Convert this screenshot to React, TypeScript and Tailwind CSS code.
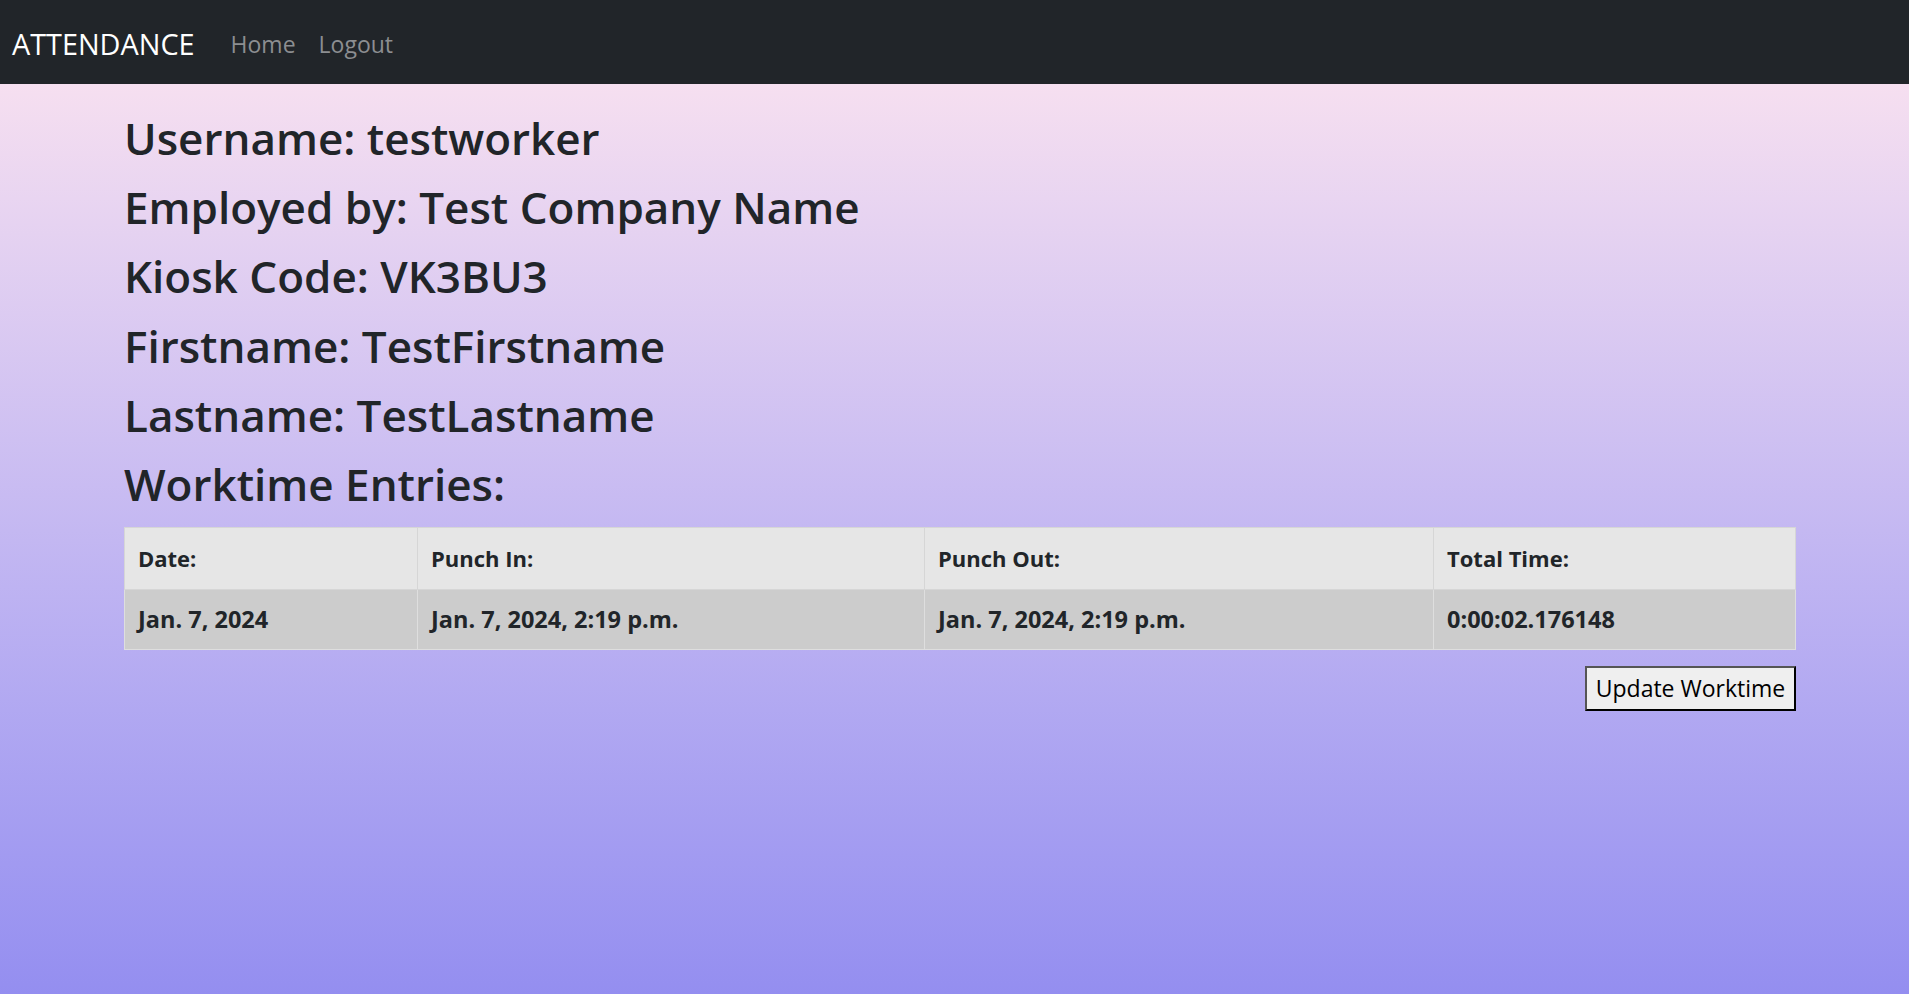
import React from "react";

const rows = [
  {
    date: "Jan. 7, 2024",
    inn: "Jan. 7, 2024, 2:19 p.m.",
    out: "Jan. 7, 2024, 2:19 p.m.",
    total: "0:00:02.176148",
  },
];

const headings = [
  "Username: testworker",
  "Employed by: Test Company Name",
  "Kiosk Code: VK3BU3",
  "Firstname: TestFirstname",
  "Lastname: TestLastname",
  "Worktime Entries:",
];

export default function App() {
  return (
    <div
      className="flex h-screen flex-col text-[#212529]"
      style={{ fontFamily: '"Open Sans", "Noto Sans", sans-serif' }}
    >
      <nav className="flex h-[84px] shrink-0 items-center bg-[#212529] pl-[12px] pt-[5px]">
        <span className="mr-[36px] text-[28.8px] leading-none text-white">ATTENDANCE</span>
        <a className="mr-[23px] text-[23px] leading-none text-[#8c8e91]">Home</a>
        <a className="text-[23px] leading-none text-[#8c8e91]">Logout</a>
      </nav>
      <main className="flex-1 bg-linear-to-b from-[#f6dff0] to-[#948ef0] pl-[124px] pr-[113px] pt-[20px]">
        {headings.map((h) => (
          <h2 key={h} className="text-[44px] font-semibold leading-[69.2px]">
            {h}
          </h2>
        ))}
        <table className="mt-[8px] w-full border-collapse border border-[#d6d6d6]">
          <thead>
            <tr className="h-[62px] bg-[#e6e6e6] text-[22px] font-bold">
              <th className="w-[293px] border border-[#d6d6d6] px-[13px] text-left">Date:</th>
              <th className="w-[507px] border border-[#d6d6d6] px-[13px] text-left">Punch In:</th>
              <th className="w-[509px] border border-[#d6d6d6] px-[13px] text-left">Punch Out:</th>
              <th className="border border-[#d6d6d6] px-[13px] text-left">Total Time:</th>
            </tr>
          </thead>
          <tbody>
            {rows.map((r, i) => (
              <tr key={i} className="h-[60px] bg-[#cccccc] text-[23.5px] font-bold">
                <td className="border border-[#dedede] px-[13px]">{r.date}</td>
                <td className="border border-[#dedede] px-[13px]">{r.inn}</td>
                <td className="border border-[#dedede] px-[13px]">{r.out}</td>
                <td className="border border-[#dedede] px-[13px]">{r.total}</td>
              </tr>
            ))}
          </tbody>
        </table>
        <div className="mt-[16px] flex justify-end">
          <button className="h-[45px] w-[211px] border-2 border-t-[#555] border-l-[#555] border-r-black border-b-black bg-[#efefef] text-[23px] text-black">
            Update Worktime
          </button>
        </div>
      </main>
    </div>
  );
}
